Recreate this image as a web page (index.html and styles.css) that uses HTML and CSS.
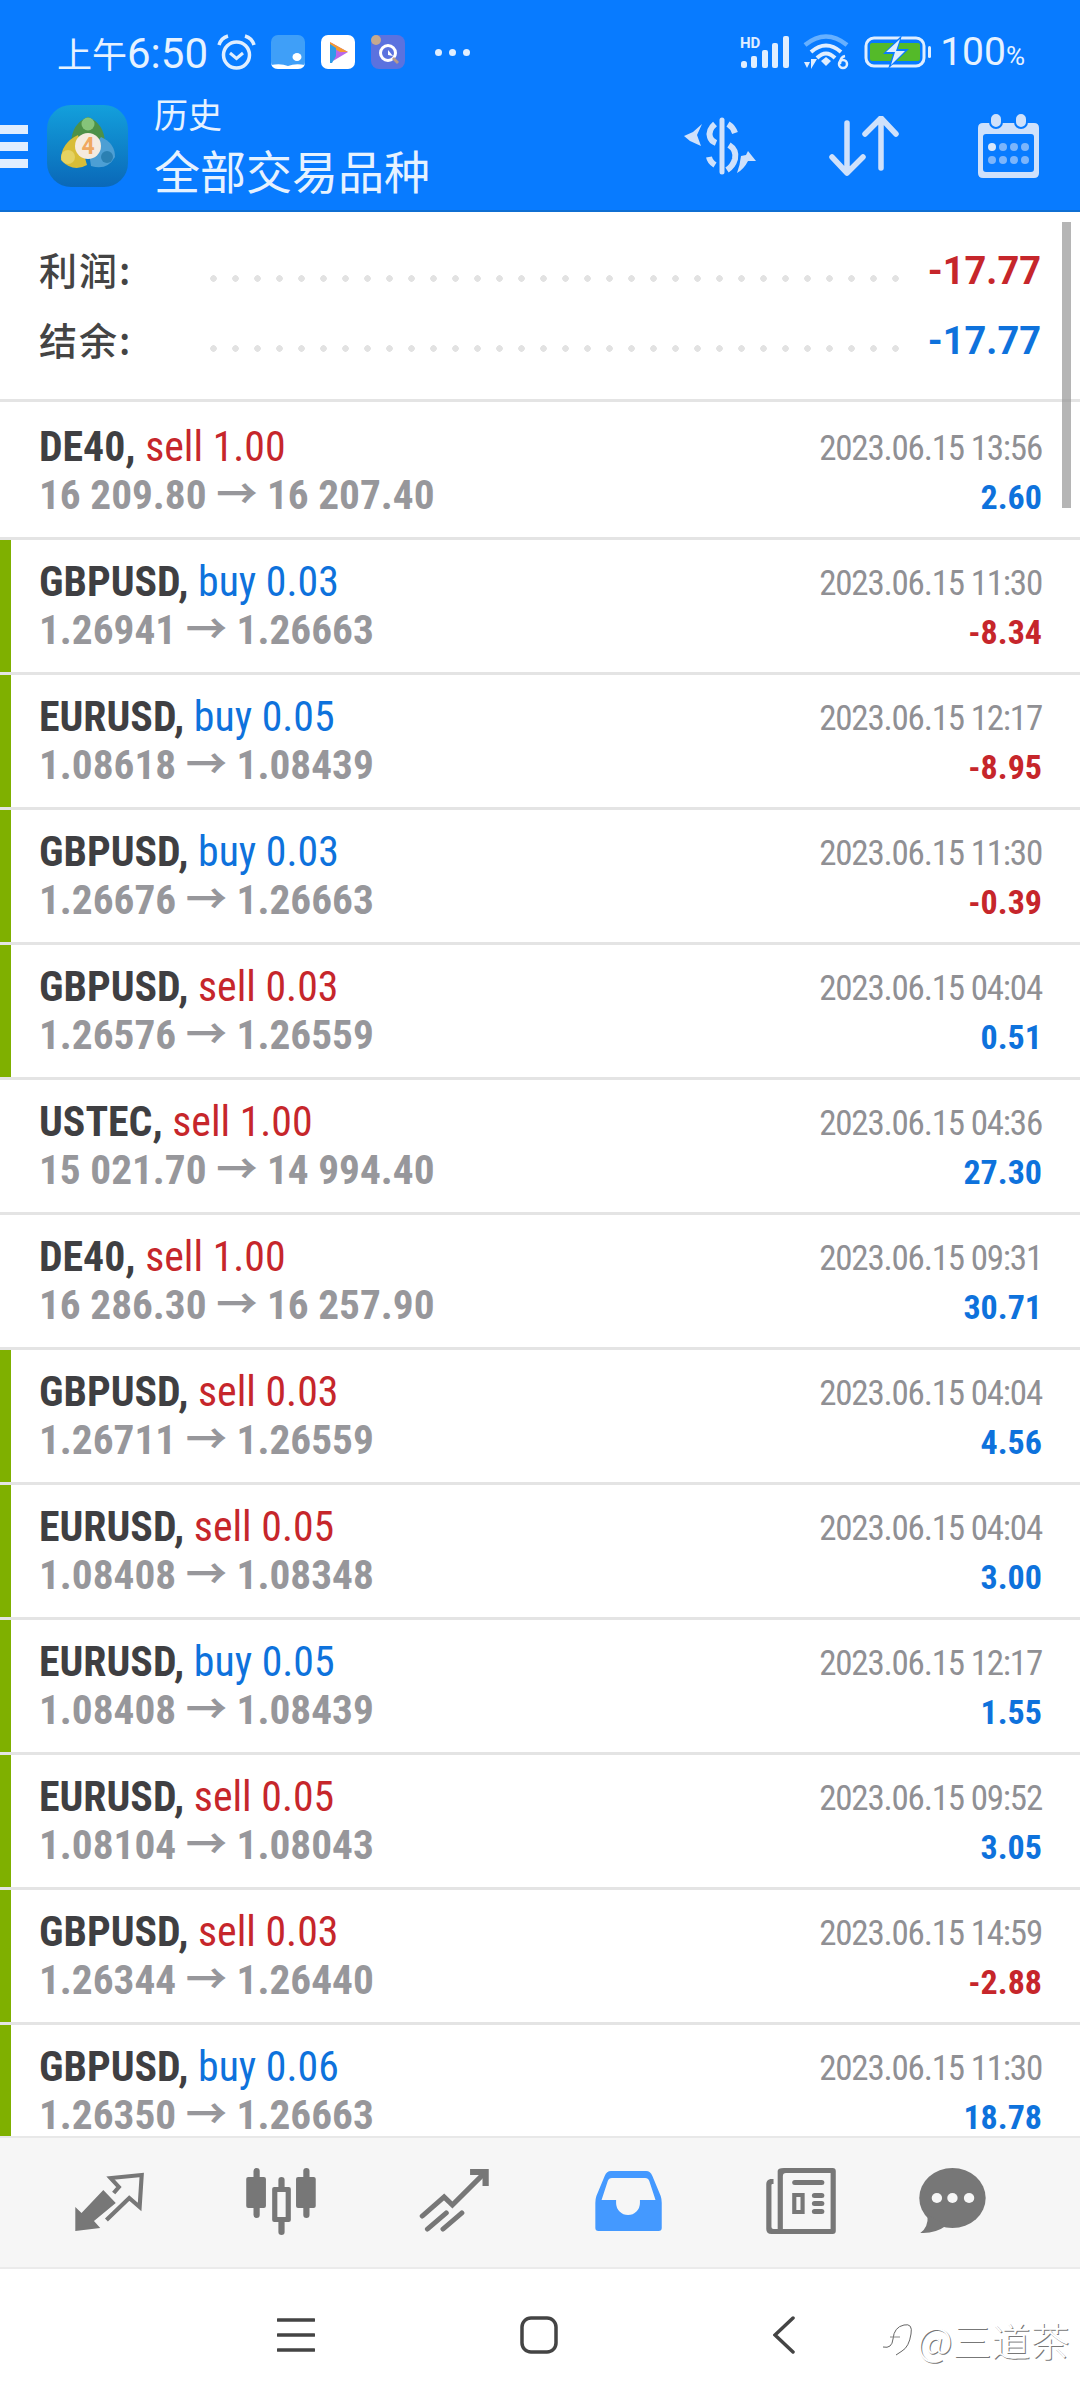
FILE: index.html
```html
<!DOCTYPE html>
<html lang="zh-CN">
<head>
    <meta charset="UTF-8">
    <title>历史</title>
    <link rel="stylesheet" href="styles.css">
</head>
<body>
<div class="app">
    <header class="head">
        <div class="status">
            <span class="clock"><span class="clock-cn">上午</span>6:50</span>
            <svg class="st-alarm" viewBox="0 0 39 37" width="39" height="37">
                <circle cx="19.500" cy="21" r="13" fill="none" stroke="#e0eeff" stroke-width="3.500"/>
                <path d="M13 19l6.500 5.500 6.500-5.500" fill="none" stroke="#e0eeff" stroke-width="3"/>
                <path d="M2 11Q4 4 11 2M37 11Q35 4 28 2" fill="none" stroke="#e0eeff" stroke-width="3.500"/>
            </svg>
            <svg class="st-app" viewBox="0 0 34 34" width="34" height="34">
                <rect width="34" height="34" rx="7" fill="#3f9ff8"/>
                <path d="M0 30Q10 28 17 31Q24 28 34 30V27Q34 34 27 34H7Q0 34 0 27Z" fill="#fff"/>
                <ellipse cx="26" cy="22" rx="4.500" ry="4" fill="#fff"/>
            </svg>
            <svg class="st-app" viewBox="0 0 34 34" width="34" height="34">
                <rect width="34" height="34" rx="7" fill="#fff"/>
                <path d="M9 7L27 17L12 26L15 17Z" fill="#b968e8"/>
                <path d="M9 7L27 17L19 17L9 11Z" fill="#f59a2f"/>
                <path d="M9 9L15 13V21L11 28L9 28Z" fill="#2f9be8"/>
            </svg>
            <svg class="st-app" viewBox="0 0 34 34" width="34" height="34">
                <rect width="34" height="34" rx="8" fill="#5b72df"/>
                <circle cx="17" cy="18" r="7.500" fill="none" stroke="#fff" stroke-width="3"/>
                <path d="M17 15l5 6-5-1z" fill="#fff"/>
                <path d="M23 22l5 5-2 2-5-5z" fill="#b89a8a"/>
                <circle cx="5" cy="5" r="5" fill="#c4a98f"/>
            </svg>
            <span class="st-more">
                <i></i><i></i><i></i>
            </span>
            <span class="st-space"></span>
            <svg class="st-signal" viewBox="0 0 50 34" width="50" height="34">
                <text x="0" y="13" class="hd-text">HD</text>
                <g fill="#e0eeff">
                    <rect x="1" y="26" width="6" height="7" rx="2.500"/>
                    <rect x="11" y="21" width="6" height="12" rx="2"/>
                    <rect x="22" y="15" width="6" height="18" rx="2"/>
                    <rect x="32" y="8" width="6" height="25" rx="2"/>
                    <rect x="43" y="1" width="6" height="32" rx="2"/>
                </g>
            </svg>
            <svg class="st-wifi" viewBox="0 0 46 36" width="46" height="36">
                <path d="M2 11Q23 -6 44 11" fill="none" stroke="#66b0ff" stroke-width="4.500"/>
                <path d="M8 18Q23 5 38 18" fill="none" stroke="#e0eeff" stroke-width="4"/>
                <path d="M14 24Q23 15 32 24" fill="none" stroke="#e0eeff" stroke-width="4"/>
                <path d="M18 27L23 23L28 27L23 32Z" fill="#e0eeff"/>
                <path d="M1 28h6l-3 6zM8 35V25h6l-3 5" fill="#e0eeff"/>
                <circle cx="40" cy="30" r="4" fill="none" stroke="#e0eeff" stroke-width="2.500"/>
                <path d="M37 30Q37 23 42 22" fill="none" stroke="#e0eeff" stroke-width="2.500"/>
            </svg>
            <svg class="st-batt" viewBox="0 0 69 32" width="69" height="32">
                <rect x="2" y="2" width="58" height="28" rx="8" fill="none" stroke="#e0eeff" stroke-width="3"/>
                <rect x="6" y="7" width="50" height="18" rx="2" fill="#54ba29"/>
                <rect x="64" y="10" width="3" height="12" rx="1.500" fill="#e0eeff"/>
                <path d="M38 -1L19 18H29L24 33L45 13H34Z" fill="#087bff"/>
                <path d="M36 3L22 16H31L27 29L41 15H32Z" fill="#e0eeff"/>
            </svg>
            <span class="batt-num">100<span class="batt-pct">%</span></span>
        </div>
        <div class="bar">
            <div class="burger"><i></i><i></i><i></i></div>
            <svg class="logo" viewBox="0 0 81 82" width="81" height="82">
                <defs>
                    <linearGradient id="lg" x1="0" y1="0" x2="0" y2="1">
                        <stop offset="0" stop-color="#13a0dc"/>
                        <stop offset="1" stop-color="#0a68b8"/>
                    </linearGradient>
                </defs>
                <rect width="81" height="82" rx="24" fill="url(#lg)"/>
                <path d="M24 38Q25 18 41 12Q57 18 58 38Q41 48 24 38Z" fill="#4d9148"/>
                <circle cx="41" cy="19" r="6.500" fill="#86c47a"/>
                <path d="M14 55Q14 38 31 30L36 46L40 60Q26 68 14 55Z" fill="#d8bd37"/>
                <circle cx="21" cy="52" r="7" fill="#e5d261"/>
                <path d="M68 52Q68 38 54 32L42 48L44 61Q60 66 68 52Z" fill="#4d9fd4"/>
                <circle cx="60" cy="52" r="6" fill="#2b80b2"/>
                <circle cx="41" cy="41" r="13" fill="#f5ebdf"/>
                <text x="41" y="49" class="logo-num">4</text>
            </svg>
            <div class="titles">
                <div class="sub">历史</div>
                <div class="title">全部交易品种</div>
            </div>
            <span class="bar-space"></span>
            <svg class="act" viewBox="0 0 74 58" width="74" height="58">
                <g fill="none" stroke="#cfe1fb" stroke-linecap="round">
                    <path d="M38 3V55" stroke-width="5"/>
                    <path d="M31 7Q24 13 26 20Q27 24 32 26M44 7Q49 10 51 16M45 28Q53 33 51 42Q49 49 43 53M25 40Q26 45 31 48" stroke-width="6" stroke-linecap="butt"/>
                </g>
                <path d="M0 19L9 15L18 7L13 18L17 29L6 24Z" fill="#cfe1fb"/>
                <path d="M72 44L64 34L62 38L57 39Q56 48 53 56Q60 52 64 44Z" fill="#cfe1fb"/>
            </svg>
            <svg class="act-sort" viewBox="0 0 72 60" width="72" height="60">
                <g fill="none" stroke="#cfe1fb" stroke-width="5.500" stroke-linecap="round" stroke-linejoin="round">
                    <path d="M19 7V57M4 41L19 57L35 41"/>
                    <path d="M53 52V2M37 18L53 2L68 18"/>
                </g>
            </svg>
            <svg class="act-cal" viewBox="0 0 63 66" width="63" height="66">
                <path d="M6 10H57Q62 10 62 15V60Q62 65 57 65H6Q1 65 1 60V15Q1 10 6 10ZM9 21Q6 21 6 24V56Q6 59 9 59H54Q57 59 57 56V24Q57 21 54 21Z" fill="#cfe1fb" fill-rule="evenodd"/>
                <rect x="13" y="0" width="12" height="15" rx="6" fill="#cfe1fb" stroke="#087bff" stroke-width="2"/>
                <rect x="38" y="0" width="12" height="15" rx="6" fill="#cfe1fb" stroke="#087bff" stroke-width="2"/>
                <g fill="#7cb5fb">
                    <circle cx="15" cy="34" r="4" fill="#d9e8fc"/><circle cx="26" cy="34" r="4"/><circle cx="37" cy="34" r="4"/><circle cx="48" cy="34" r="4"/>
                    <circle cx="15" cy="47" r="4"/><circle cx="26" cy="47" r="4"/><circle cx="37" cy="47" r="4"/><circle cx="48" cy="47" r="4"/>
                </g>
            </svg>
        </div>
    </header>

    <main class="list">
        <div class="scrollbar"></div>
        <section class="summary">
            <div class="sum-row"><span class="sum-label">利润:</span><span class="leader"></span><span class="sum-val red">-17.77</span></div>
            <div class="sum-row"><span class="sum-label">结余:</span><span class="leader"></span><span class="sum-val blue">-17.77</span></div>
        </section>

        <div class="row row-first">
            <div class="left"><div class="l1"><b>DE40,</b> <span class="red">sell 1.00</span></div><div class="l2">16 209.80 <span class="arr">→</span> 16 207.40</div></div>
            <div class="right"><div class="date">2023.06.15 13:56</div><div class="amt blue">2.60</div></div>
        </div>
        <div class="row mark">
            <div class="left"><div class="l1"><b>GBPUSD,</b> <span class="blue">buy 0.03</span></div><div class="l2">1.26941 <span class="arr">→</span> 1.26663</div></div>
            <div class="right"><div class="date">2023.06.15 11:30</div><div class="amt red">-8.34</div></div>
        </div>
        <div class="row mark">
            <div class="left"><div class="l1"><b>EURUSD,</b> <span class="blue">buy 0.05</span></div><div class="l2">1.08618 <span class="arr">→</span> 1.08439</div></div>
            <div class="right"><div class="date">2023.06.15 12:17</div><div class="amt red">-8.95</div></div>
        </div>
        <div class="row mark">
            <div class="left"><div class="l1"><b>GBPUSD,</b> <span class="blue">buy 0.03</span></div><div class="l2">1.26676 <span class="arr">→</span> 1.26663</div></div>
            <div class="right"><div class="date">2023.06.15 11:30</div><div class="amt red">-0.39</div></div>
        </div>
        <div class="row mark">
            <div class="left"><div class="l1"><b>GBPUSD,</b> <span class="red">sell 0.03</span></div><div class="l2">1.26576 <span class="arr">→</span> 1.26559</div></div>
            <div class="right"><div class="date">2023.06.15 04:04</div><div class="amt blue">0.51</div></div>
        </div>
        <div class="row">
            <div class="left"><div class="l1"><b>USTEC,</b> <span class="red">sell 1.00</span></div><div class="l2">15 021.70 <span class="arr">→</span> 14 994.40</div></div>
            <div class="right"><div class="date">2023.06.15 04:36</div><div class="amt blue">27.30</div></div>
        </div>
        <div class="row">
            <div class="left"><div class="l1"><b>DE40,</b> <span class="red">sell 1.00</span></div><div class="l2">16 286.30 <span class="arr">→</span> 16 257.90</div></div>
            <div class="right"><div class="date">2023.06.15 09:31</div><div class="amt blue">30.71</div></div>
        </div>
        <div class="row mark">
            <div class="left"><div class="l1"><b>GBPUSD,</b> <span class="red">sell 0.03</span></div><div class="l2">1.26711 <span class="arr">→</span> 1.26559</div></div>
            <div class="right"><div class="date">2023.06.15 04:04</div><div class="amt blue">4.56</div></div>
        </div>
        <div class="row mark">
            <div class="left"><div class="l1"><b>EURUSD,</b> <span class="red">sell 0.05</span></div><div class="l2">1.08408 <span class="arr">→</span> 1.08348</div></div>
            <div class="right"><div class="date">2023.06.15 04:04</div><div class="amt blue">3.00</div></div>
        </div>
        <div class="row mark">
            <div class="left"><div class="l1"><b>EURUSD,</b> <span class="blue">buy 0.05</span></div><div class="l2">1.08408 <span class="arr">→</span> 1.08439</div></div>
            <div class="right"><div class="date">2023.06.15 12:17</div><div class="amt blue">1.55</div></div>
        </div>
        <div class="row mark">
            <div class="left"><div class="l1"><b>EURUSD,</b> <span class="red">sell 0.05</span></div><div class="l2">1.08104 <span class="arr">→</span> 1.08043</div></div>
            <div class="right"><div class="date">2023.06.15 09:52</div><div class="amt blue">3.05</div></div>
        </div>
        <div class="row mark">
            <div class="left"><div class="l1"><b>GBPUSD,</b> <span class="red">sell 0.03</span></div><div class="l2">1.26344 <span class="arr">→</span> 1.26440</div></div>
            <div class="right"><div class="date">2023.06.15 14:59</div><div class="amt red">-2.88</div></div>
        </div>
        <div class="row mark">
            <div class="left"><div class="l1"><b>GBPUSD,</b> <span class="blue">buy 0.06</span></div><div class="l2">1.26350 <span class="arr">→</span> 1.26663</div></div>
            <div class="right"><div class="date">2023.06.15 11:30</div><div class="amt blue">18.78</div></div>
        </div>
    </main>

    <nav class="tabs">
        <svg class="tab" viewBox="0 0 80 80" preserveAspectRatio="none">
            <path d="M8 68V44L14 50L35 27L47 40L26 58L32 65Z" fill="#777"/>
            <path d="M38 57L60 35L70 44L72 12L42 15L50 24L45 30" fill="none" stroke="#777" stroke-width="4"/>
        </svg>
        <svg class="tab" viewBox="0 0 80 80" preserveAspectRatio="none">
            <g fill="#777">
                <rect x="13" y="5" width="6" height="50" rx="3"/>
                <rect x="6" y="14" width="19" height="31" rx="2"/>
                <rect x="61" y="5" width="6" height="50" rx="3"/>
                <rect x="54" y="14" width="19" height="31" rx="2"/>
                <rect x="37" y="14" width="6" height="58" rx="3"/>
                <rect x="31" y="24" width="18" height="35" rx="2"/>
            </g>
            <rect x="36" y="29" width="8" height="25" fill="#f6f6f6"/>
        </svg>
        <svg class="tab" viewBox="0 0 80 80" preserveAspectRatio="none">
            <g fill="none" stroke="#777" stroke-width="5" stroke-linecap="round">
                <path d="M9 53L30 34L38 42L67 12"/>
                <path d="M55 9H70V23" stroke-width="6" stroke-linecap="butt"/>
                <path d="M14 66L32 50M29 66L47 50"/>
            </g>
        </svg>
        <svg class="tab" viewBox="0 0 80 80" preserveAspectRatio="none">
            <path fill-rule="evenodd" fill="#4499ff" d="M24 8H58Q62 8 64 13L72 33Q73 36 73 40V65Q73 68 70 68H12Q9 68 9 65V40Q9 36 10 33L18 13Q20 8 24 8ZM25 15Q22 15 21 18L15 37H29V40A11.500 12 0 0 0 52 40V37H67L61 18Q60 15 57 15Z"/>
        </svg>
        <svg class="tab" viewBox="0 0 80 80" preserveAspectRatio="none">
            <path fill-rule="evenodd" fill="#777" d="M24 5H71Q74 5 74 8V68Q74 71 71 71H12Q7 71 7 66V21Q7 17 11 16H14V21H13Q12 21 12 22V64Q12 66 14 66H18V8Q18 5 24 5ZM26 10Q23 10 23 13V66H69V10Z"/>
            <g fill="#777">
                <rect x="32" y="17" width="31" height="5" rx="2.500"/>
                <rect x="51" y="30" width="12" height="5" rx="2.500"/>
                <rect x="51" y="38" width="12" height="5" rx="2.500"/>
                <rect x="51" y="46" width="12" height="5" rx="2.500"/>
            </g>
            <path fill-rule="evenodd" fill="#777" d="M32 30H44V51H32ZM36 34V47H40V34Z"/>
        </svg>
        <svg class="tab tab-last" viewBox="0 0 80 80" preserveAspectRatio="none">
            <ellipse cx="39" cy="35" rx="32" ry="30" fill="#777"/>
            <path d="M15 52Q16 64 8 70Q22 71 34 62Z" fill="#777"/>
            <circle cx="24" cy="35" r="5" fill="#f6f6f6"/>
            <circle cx="39" cy="35" r="5" fill="#f6f6f6"/>
            <circle cx="55" cy="35" r="5" fill="#f6f6f6"/>
        </svg>
    </nav>

    <footer class="sysnav">
        <svg class="nav-menu" viewBox="0 0 38 36" width="38" height="36">
            <path d="M1 3H37M1 18H37M1 33H37" stroke="#444" stroke-width="3.500" stroke-linecap="round"/>
        </svg>
        <svg class="nav-home" viewBox="0 0 38 38" width="38" height="38">
            <rect x="2" y="2" width="34" height="34" rx="9" fill="none" stroke="#444" stroke-width="3.500"/>
        </svg>
        <svg class="nav-back" viewBox="0 0 22 38" width="22" height="38">
            <path d="M20 2L2 19L20 36" fill="none" stroke="#444" stroke-width="3.500" stroke-linecap="round"/>
        </svg>
        <div class="mark-text">
            <svg viewBox="0 0 32 40" width="32" height="40">
                <path d="M1 28Q10 30 11 20Q12 8 22 6Q31 4 29 15Q27 28 20 32L14 36" fill="none" stroke="#666" stroke-width="1"/>
                <path d="M8 18H18" stroke="#888" stroke-width="1"/>
            </svg>
            <span>@三道茶</span>
        </div>
    </footer>
</div>
</body>
</html>
```

FILE: styles.css
```css
* {
    margin: 0;
    padding: 0;
    box-sizing: border-box;
}

body {
    background: #fff;
    font-family: "Roboto Condensed", Roboto, "Noto Sans CJK SC", sans-serif;
}

.app {
    position: relative;
    display: flex;
    flex-direction: column;
    width: 1080px;
    height: 2400px;
    overflow: hidden;
}

/* top blue part */
.head {
    height: 212px;
    flex: none;
    background: #087bff;
    border-bottom: 2px solid #0f6fd3;
    color: #e6f2ff;
}

.status {
    display: flex;
    align-items: center;
    height: 90px;
    padding: 14px 55px 0 57px;
}

.clock {
    width: 160px;
    flex: none;
    font-family: Roboto, "Noto Sans CJK SC", sans-serif;
    font-size: 42px;
    white-space: nowrap;
}

.clock-cn {
    font-size: 35px;
}

.st-alarm {
    margin-right: 15px;
}

.st-app {
    margin-right: 16px;
}

.st-more {
    display: flex;
    gap: 7px;
    margin-left: 14px;
}

.st-more i {
    width: 7px;
    height: 7px;
    border-radius: 50%;
    background: #e0eeff;
}

.st-space {
    flex: 1;
}

.hd-text {
    font: bold 15px Roboto, sans-serif;
    fill: #e0eeff;
}

.st-signal {
    margin-right: 13px;
}

.st-wifi {
    margin-right: 15px;
}

.st-batt {
    margin-right: 7px;
}

.batt-num {
    font-family: Roboto, sans-serif;
    font-size: 39px;
}

.batt-pct {
    font-size: 26px;
}

.bar {
    display: flex;
    align-items: center;
    height: 112px;
    padding-right: 40px;
}

.burger {
    width: 28px;
    margin-right: 19px;
}

.burger i {
    display: block;
    height: 9px;
    margin-bottom: 8px;
    background: #e0eeff;
}

.burger i:last-child {
    margin-bottom: 0;
}

.logo {
    margin-right: 26px;
}

.titles {
    font-family: "Noto Sans CJK SC", sans-serif;
}

.logo-num {
    font: bold 23px Roboto, sans-serif;
    text-anchor: middle;
    fill: #f0a860;
}

.sub {
    font-size: 34px;
    line-height: 46px;
}

.title {
    font-size: 46px;
    line-height: 64px;
}

.bar-space {
    flex: 1;
}

.act-sort {
    margin: 0 77px 0 70px;
}

/* list */
.list {
    position: relative;
    flex: 1;
    overflow: hidden;
}

.scrollbar {
    position: absolute;
    left: 1062px;
    top: 10px;
    width: 9px;
    height: 286px;
    background: rgba(150, 150, 150, .7);
}

.summary {
    height: 190px;
    padding: 24px 39px 0;
    border-bottom: 3px solid #e4e4e4;
}

.sum-row {
    display: flex;
    align-items: center;
    height: 70px;
}

.sum-label {
    width: 171px;
    flex: none;
    margin-bottom: 6px;
    font-family: "Noto Sans CJK SC", sans-serif;
    font-size: 38px;
    font-weight: 500;
    letter-spacing: 2px;
    color: #444;
}

.leader {
    width: 690px;
    height: 7px;
    margin-top: 14px;
    background: radial-gradient(circle at 3.500px 3.500px, #e2e2e2 3px, transparent 3.500px) 0 0 / 22px 7px repeat-x;
}

.sum-val {
    flex: 1;
    font-family: Roboto, sans-serif;
    font-size: 38px;
    font-weight: 700;
    text-align: right;
}

.red {
    color: #c6262b;
}

.blue {
    color: #0e72dc;
}

.row {
    display: flex;
    justify-content: space-between;
    height: 135px;
    padding: 14px 38px 0 39px;
    border-bottom: 3px solid #e4e4e4;
}

.row-first {
    height: 138px;
    padding-top: 17px;
}

.row.mark {
    box-shadow: inset 11px 0 0 #7fb000;
}

.l1 {
    font-size: 41.800px;
    line-height: 56px;
    color: #3f3f42;
}

.l2 {
    font-size: 41.300px;
    line-height: 40px;
    font-weight: 700;
    color: #97979b;
}

.right {
    text-align: right;
}

.date {
    font-size: 35px;
    line-height: 60px;
    letter-spacing: -1.200px;
    color: #909094;
}

.amt {
    font-size: 34px;
    line-height: 36px;
    font-weight: 700;
}

/* bottom tab bar */
.tabs {
    display: flex;
    align-items: center;
    flex: none;
    gap: 90px;
    height: 133px;
    padding-left: 67px;
    background: #f6f6f6;
    border-top: 2px solid #e8e8e8;
    border-bottom: 2px solid #ebebeb;
}

.tab {
    width: 83px;
    height: 80px;
}

.tab-last {
    margin-left: -20px;
}

/* system nav */
.sysnav {
    position: relative;
    display: flex;
    align-items: center;
    flex: none;
    height: 131px;
    padding-left: 277px;
}

.nav-home {
    margin-left: 205px;
}

.nav-back {
    margin-left: 215px;
}

.mark-text {
    position: absolute;
    left: 882px;
    top: 42px;
    display: flex;
    align-items: center;
    gap: 3px;
    font-family: "Noto Sans CJK SC", sans-serif;
    font-size: 39px;
    font-weight: 300;
    color: #fff;
    text-shadow: 1px 1px 0 #777;
}
```
